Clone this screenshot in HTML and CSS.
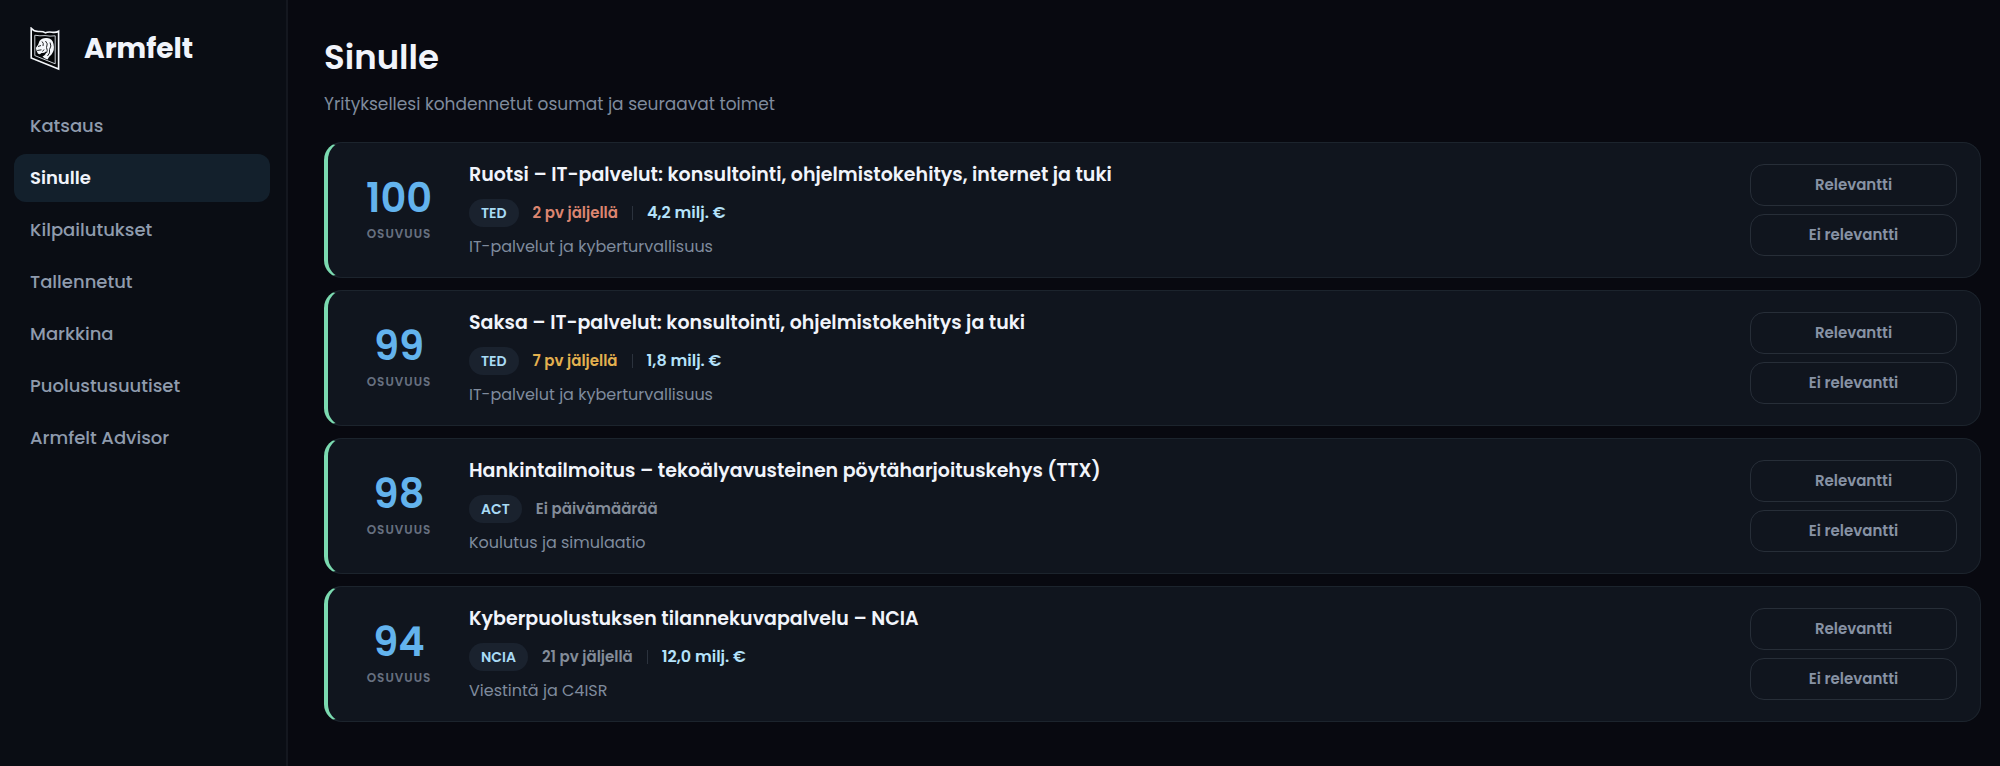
FILE: index.html
```html
<!DOCTYPE html>
<html lang="fi">
<head>
<meta charset="utf-8">
<meta name="viewport" content="width=device-width, initial-scale=1">
<title>Armfelt – Sinulle</title>
<link rel="stylesheet" href="styles.css">
</head>
<body>
<div class="app">
  <aside class="sidebar">
    <a class="brand" href="#">
      <svg class="brand-mark" viewBox="0 0 30 44" aria-hidden="true">
        <path d="M1.200 1.200Q4 4.600 8.500 4.500Q13 4.200 15.500 5.800Q18 4.600 22 5.200Q26 5.800 28.600 4.200V42L1.200 31Z" fill="#050608" stroke="#f4f6fa" stroke-width="1.600"/>
        <path d="M4.800 8.200Q10 9.200 15 8.600Q20 9.600 25.200 8.800V36.800L4.800 28.600Z" fill="none" stroke="#c9cdd4" stroke-width="1"/>
        <path d="M9.500 14Q12 10.500 17 11Q22.500 11.500 23.500 17Q25 23 21.500 27.500Q19 29.500 17.500 32.500Q14 31.500 12.500 29.500Q16.500 27.500 16 24.500Q14 26.500 11.500 26Q10 28 7.800 26.500L6.500 23.500L5.800 21L8.200 17.500Z" fill="#f4f6fa"/>
        <path d="M8 19.500L11 18.500M7.200 23.500L11.500 22.800M12 14.500Q14 16 13 19M15.500 14Q18.500 16.500 16.500 20.500Q18 23.500 16.500 26M20 15.500Q22 19 19.500 22.500Q20.500 26 17.500 29M14 22.500L12.500 24.500" fill="none" stroke="#08090c" stroke-width=".9"/>
      </svg>
      <span class="brand-name">Armfelt</span>
    </a>
    <nav class="nav" aria-label="Päävalikko">
      <a class="nav-link" href="#">Katsaus</a>
      <a class="nav-link is-active" href="#" aria-current="page">Sinulle</a>
      <a class="nav-link" href="#">Kilpailutukset</a>
      <a class="nav-link" href="#">Tallennetut</a>
      <a class="nav-link" href="#">Markkina</a>
      <a class="nav-link" href="#">Puolustusuutiset</a>
      <a class="nav-link" href="#">Armfelt Advisor</a>
    </nav>
  </aside>
  <main class="main">
    <h1 class="page-title">Sinulle</h1>
    <p class="page-subtitle">Yrityksellesi kohdennetut osumat ja seuraavat toimet</p>
    <div class="cards">
      <article class="card">
        <div class="score"><span class="score-value">100</span><span class="score-label">OSUVUUS</span></div>
        <div class="details">
          <h2 class="card-title">Ruotsi – IT-palvelut: konsultointi, ohjelmistokehitys, internet ja tuki</h2>
          <div class="meta"><span class="tag">TED</span><span class="due due-urgent">2 pv jäljellä</span><span class="divider"></span><span class="amount">4,2 milj. €</span></div>
          <p class="category">IT-palvelut ja kyberturvallisuus</p>
        </div>
        <div class="actions"><button class="button" type="button">Relevantti</button><button class="button" type="button">Ei relevantti</button></div>
      </article>
      <article class="card">
        <div class="score"><span class="score-value">99</span><span class="score-label">OSUVUUS</span></div>
        <div class="details">
          <h2 class="card-title">Saksa – IT-palvelut: konsultointi, ohjelmistokehitys ja tuki</h2>
          <div class="meta"><span class="tag">TED</span><span class="due due-soon">7 pv jäljellä</span><span class="divider"></span><span class="amount">1,8 milj. €</span></div>
          <p class="category">IT-palvelut ja kyberturvallisuus</p>
        </div>
        <div class="actions"><button class="button" type="button">Relevantti</button><button class="button" type="button">Ei relevantti</button></div>
      </article>
      <article class="card">
        <div class="score"><span class="score-value">98</span><span class="score-label">OSUVUUS</span></div>
        <div class="details">
          <h2 class="card-title">Hankintailmoitus – tekoälyavusteinen pöytäharjoituskehys (TTX)</h2>
          <div class="meta"><span class="tag">ACT</span><span class="due">Ei päivämäärää</span></div>
          <p class="category">Koulutus ja simulaatio</p>
        </div>
        <div class="actions"><button class="button" type="button">Relevantti</button><button class="button" type="button">Ei relevantti</button></div>
      </article>
      <article class="card">
        <div class="score"><span class="score-value">94</span><span class="score-label">OSUVUUS</span></div>
        <div class="details">
          <h2 class="card-title">Kyberpuolustuksen tilannekuvapalvelu – NCIA</h2>
          <div class="meta"><span class="tag">NCIA</span><span class="due">21 pv jäljellä</span><span class="divider"></span><span class="amount">12,0 milj. €</span></div>
          <p class="category">Viestintä ja C4ISR</p>
        </div>
        <div class="actions"><button class="button" type="button">Relevantti</button><button class="button" type="button">Ei relevantti</button></div>
      </article>
    </div>
  </main>
</div>
</body>
</html>
```
FILE: styles.css
```css
* {
  box-sizing: border-box;
}

body {
  margin: 0;
  background: #080910;
  color: #f1f4fb;
  font-family: Poppins, Inter, sans-serif;
}

h1, h2, p {
  margin: 0;
}

a {
  color: inherit;
  text-decoration: none;
}

.app {
  display: grid;
  grid-template-columns: 288px minmax(0, 1fr);
  min-height: 100vh;
}

.sidebar {
  padding: 25px 16px 24px 14px;
  background: #0a0d14;
  border-right: 2px solid #14171f;
}

.brand {
  display: flex;
  align-items: center;
  gap: 24px;
  height: 48px;
  padding-left: 16px;
}

.brand-mark {
  width: 30px;
  height: 44px;
}

.brand-name {
  font-size: 28px;
  font-weight: 700;
  line-height: 48px;
}

.nav {
  display: grid;
  gap: 4px;
  margin-top: 29px;
}

.nav-link {
  padding: 0 16px;
  border-radius: 12px;
  color: #8f9bad;
  font-size: 18px;
  font-weight: 500;
  line-height: 48px;
}

.nav-link.is-active {
  background: #13202c;
  color: #f1f4fb;
  font-weight: 600;
}

.main {
  padding: 32px 19px 44px 36px;
}

.page-title {
  font-size: 34px;
  font-weight: 600;
  line-height: 50px;
}

.page-subtitle {
  margin-top: 8px;
  color: #7f8b9d;
  font-size: 17px;
  line-height: 28px;
}

.cards {
  display: grid;
  gap: 12px;
  margin-top: 24px;
}

.card {
  display: flex;
  align-items: center;
  min-height: 136px;
  padding: 16px 23px 16px 28px;
  background: #10151e;
  border: 1px solid #1c242d;
  border-left: 4px solid #7bdab0;
  border-radius: 18px;
}

.score {
  display: flex;
  flex-direction: column;
  align-items: center;
  flex: none;
  width: 86px;
}

.score-value {
  color: #63b3ed;
  font-size: 40px;
  font-weight: 600;
  line-height: 40px;
}

.score-label {
  margin-top: 8px;
  color: #677080;
  font-size: 12px;
  font-weight: 600;
  letter-spacing: 1px;
  line-height: 16px;
}

.details {
  flex: 1;
  min-width: 0;
  margin-left: 27px;
}

.card-title {
  font-size: 19px;
  font-weight: 600;
  line-height: 28px;
}

.meta {
  display: flex;
  align-items: center;
  gap: 14px;
  margin-top: 10px;
  font-size: 16px;
  font-weight: 600;
  line-height: 28px;
}

.tag {
  padding: 0 12px;
  border-radius: 14px;
  background: #1a222e;
  color: #a9dbf5;
  font-size: 14px;
}

.due {
  color: #838c99;
  font-size: 15px;
}

.due-urgent {
  color: #dc8570;
}

.due-soon {
  color: #e3b04f;
}

.divider {
  width: 1px;
  height: 14px;
  background: #2b323d;
}

.amount {
  color: #b5e2fa;
}

.category {
  margin-top: 8px;
  color: #7f8b9d;
  font-size: 16px;
  line-height: 24px;
}

.actions {
  display: grid;
  gap: 8px;
  flex: none;
  width: 207px;
}

.button {
  height: 42px;
  padding: 0 16px;
  background: transparent;
  border: 1px solid #272e38;
  border-radius: 14px;
  color: #8792a4;
  font: inherit;
  font-size: 15px;
  font-weight: 600;
  line-height: 20px;
  cursor: pointer;
}
```
